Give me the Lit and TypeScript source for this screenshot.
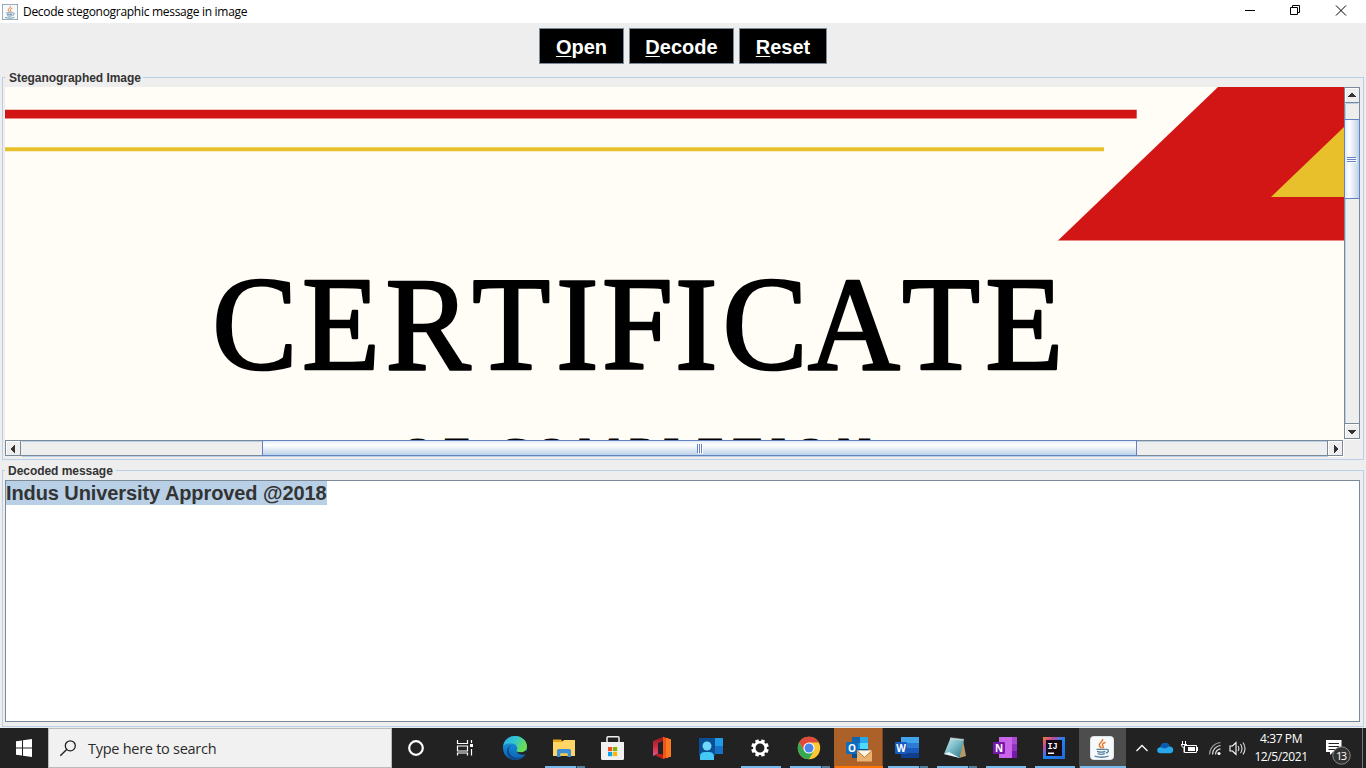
import { LitElement, html, svg, css } from "lit";
import { customElement, property } from "lit/decorators.js";
import { classMap } from "lit/directives/class-map.js";

const javaCup = svg`
  <rect x="11.500" y="8.500" width="23" height="23" rx="3" fill="#f7f9fa" stroke="#dfe6ea"/>
  <path d="M23.600 11c1 2.800-4.400 3.800-3.200 6.600.4 1 1.400 1.800 2 2.600M26.500 14.200c-2.600 1-4 2.200-2.600 3.800.7.9.4 1.700-.3 2.400" fill="none" stroke="#e8762c" stroke-width="1.500"/>
  <path d="M17.500 21.300h9.200M18 23.300c2.500 1 6 1 8.400 0M18.800 25.600c2 .8 5 .8 7 0M15.600 28.200c4 1.500 10.500 1.400 14-.2M27 21.500c3-.8 3.500 2.500-.2 3.700" fill="none" stroke="#5682a1" stroke-width="1.300"/>`;

const letterTile = (letter: string, dark: string) => svg`
  <rect x="12" y="14" width="12" height="12" rx="1" fill=${dark}/>
  <text x="18" y="24" class="tile-letter" text-anchor="middle">${letter}</text>`;

const ICONS: Record<string, unknown> = {
  cortana: svg`<circle cx="23" cy="20" r="6.800" fill="none" stroke="#fff" stroke-width="2.200"/>`,
  taskview: svg`
    <path d="M15.500 12v3.500h10V12M15.500 27.500V25h10v2.500M15.500 18h10v5h-10z" fill="none" stroke="#fff" stroke-width="1.200"/>
    <path d="M29.500 12v3M29.500 21v6.500" stroke="#fff" stroke-width="1.200"/><rect x="28" y="16" width="3" height="3" fill="#fff"/>`,
  edge: svg`
    <defs>
      <linearGradient id="e1" x1="0" y1="0" x2="1" y2=".4"><stop offset="0" stop-color="#2aa9e8"/><stop offset=".5" stop-color="#31c5d4"/><stop offset="1" stop-color="#6ae04e"/></linearGradient>
      <linearGradient id="e2" x1="0" y1="0" x2="0" y2="1"><stop offset="0" stop-color="#1b9de0"/><stop offset="1" stop-color="#0b63b8"/></linearGradient>
    </defs>
    <circle cx="24" cy="20" r="12" fill="url(#e2)"/>
    <path d="M12 18.500C13 12 18 8 24 8c7 0 12 5 12 10.600 0 3.800-3 5.900-6.500 5.900-2.500 0-4.500-.7-4-1.800 1.700-2.200.8-6.700-4.500-7.200-4.500-.4-8 .8-9 3z" fill="url(#e1)"/>
    <path d="M20.500 17c-4 2.500-3.500 9 1.200 11.500 4.500 2.400 9.500 1 12.300-1.500-3 5-10 6.500-14.500 3.500-5-3.300-5-11 1-13.500z" fill="#114a8b"/>
    <path d="M25.500 22.700c1 2.200 6.500 2.300 9.200-.2l2 1.500-2 2.200c-4 1.300-8.200 0-9.200-3.500z" fill="#222"/>`,
  folder: svg`
    <path d="M13 11.500h8l1.500 2H35V28H13z" fill="#e9a614"/><path d="M13 14h9l2-2h11v16H13z" fill="#ffd566"/>
    <path d="M17 29v-6.500q0-1.500 1.500-1.500h11q1.500 0 1.500 1.500V29h-3.500v-3.500h-7V29z" fill="#3c8fd6"/><path d="M20.500 25.500h7V28h-7z" fill="#f5c64a"/>`,
  store: svg`
    <path d="M18 15V9.700q0-1 1-1h10q1 0 1 1V15" fill="none" stroke="#eee" stroke-width="1.500"/>
    <path d="M12 14h23v16.500q0 1.500-1.500 1.500h-20Q12 32 12 30.500z" fill="#f1f1f1"/>
    <path d="M19 19h4.200v4.200H19z" fill="#f25022"/><path d="M24 19h4.200v4.200H24z" fill="#7fba00"/><path d="M19 24h4.200v4.200H19z" fill="#00a4ef"/><path d="M24 24h4.200v4.200H24z" fill="#ffb900"/>`,
  office: svg`
    <defs><linearGradient id="o1" x1="0" y1="0" x2="0" y2="1"><stop offset="0" stop-color="#8e1a1a"/><stop offset=".6" stop-color="#d8304e"/><stop offset="1" stop-color="#e05a9a"/></linearGradient></defs>
    <path d="M15 13l10-4.300V13l-5 2v10.500L15 28z" fill="url(#o1)"/>
    <path d="M25 8.700l8 2.800v17L25 31z" fill="#f2541b"/><path d="M28 9.800l5 1.700v17l-5 1.500z" fill="#fb7a1e"/>
    <path d="M17 27.300l3-1.500 5 .7V31z" fill="#b8211f"/>`,
  people: svg`
    <path d="M12 10h16v18H12z" fill="#0a4f94"/><path d="M28 10h8v16h-8z" fill="#1f9be8"/><path d="M28 18h8v8h-8z" fill="#1672c4"/>
    <circle cx="20" cy="18" r="4.500" fill="#6fd8f8"/><path d="M13 32v-3q0-5 5-5h4q5 0 5 5v3z" fill="#45c8f5"/>`,
  settings: svg`
    <circle cx="24" cy="20" r="5.700" fill="none" stroke="#fff" stroke-width="2.500"/>
    ${[0, 45, 90, 135, 180, 225, 270, 315].map((a) => svg`<path d="M22.200 11.200h3.600v3h-3.600z" fill="#fff" transform="rotate(${a + 22.5} 24 20)"/>`)}`,
  chrome: svg`
    <circle cx="24" cy="20" r="11.200" fill="#fcc934"/>
    <path d="M14.300 14.400A11.200 11.200 0 0 1 33.700 14.400H24l-5 8.500z" fill="#e0483b"/>
    <path d="M14.300 14.400A11.200 11.200 0 0 0 24 31.200l4.900-8.400-9.800.2z" fill="#34a853"/>
    <circle cx="24" cy="20" r="5.600" fill="#fff"/><circle cx="24" cy="20" r="4.500" fill="#4a86e8"/>`,
  outlook: svg`
    <path d="M18 9h16v18H18z" fill="#1490df"/><path d="M18 9h8v6h-8z" fill="#0f65ae"/><path d="M26 9h8v6h-8z" fill="#28a8ea"/><path d="M26 15h8v6h-8z" fill="#50d9ff"/><path d="M18 21h16v9H18z" fill="#0a4e90"/>
    ${letterTile("O", "#0f6cbd")}
    <path d="M23 22.500h15v11H23z" fill="#e9b36f"/><path d="M23 22.500h15l-7.500 6.500z" fill="#fff3e2"/><path d="M23 22.500l7.500 7 7.500-7" fill="none" stroke="#b9752f" stroke-width=".9"/>`,
  word: svg`
    <path d="M18 9h18v6H18z" fill="#41a5ee"/><path d="M18 15h18v5H18z" fill="#2b7cd3"/><path d="M18 20h18v5.500H18z" fill="#185abd"/><path d="M18 25.500h18V30H18z" fill="#103f91"/>
    ${letterTile("W", "#185abd")}`,
  notepad: svg`
    <defs><linearGradient id="n1" x1="0" y1="0" x2="1" y2="1"><stop offset="0" stop-color="#d4eff2"/><stop offset=".5" stop-color="#74b8c4"/><stop offset="1" stop-color="#2f7180"/></linearGradient></defs>
    <path d="M31 12l3 16-7 2z" fill="#b79a64"/><path d="M18.500 10L32 11.500 27.500 30 12 26z" fill="url(#n1)"/>
    <path d="M12 26l5-2 11 6z" fill="#e8f4f5"/><path d="M18.500 10.300L32 11.800" stroke="#ededed" stroke-dasharray="1 1" stroke-width="2"/>`,
  onenote: svg`
    <path d="M18 9h18v21H18z" fill="#ca64ea"/><path d="M31 9h5v7h-5z" fill="#ae4bd5"/><path d="M31 16h5v7h-5z" fill="#9332bf"/><path d="M31 23h5v7h-5z" fill="#7719aa"/>
    ${letterTile("N", "#7719aa")}`,
  idea: svg`
    <defs><linearGradient id="i1" x1="0" y1="0" x2="1" y2="1"><stop offset="0" stop-color="#f97a36"/><stop offset=".25" stop-color="#c24a9a"/><stop offset=".5" stop-color="#1c83f5"/><stop offset="1" stop-color="#2468dc"/></linearGradient></defs>
    <path d="M13 9h22v22H13z" fill="url(#i1)"/><path d="M16 12h16v16H16z" fill="#170b14"/>
    <text x="17.500" y="20.500" class="idea-letter">IJ</text><path d="M18 24.500h6V26h-6z" fill="#fff"/>`,
  java: javaCup,
};

@customElement("task-button")
class TaskButton extends LitElement {
  @property() icon = "";
  @property() state = "";
  @property({ type: Boolean }) stacked = false;

  static styles = css`
    :host { display: block; flex: none; width: 49px; height: 40px; }
    .cell { width: 49px; height: 40px; display: grid; box-sizing: border-box; }
    .cell > * { grid-area: 1 / 1; }
    .alert { background: #ab6128; border-right: 1px solid #7d451c; }
    .active { background: #4d4d4d; width: 47px; overflow: hidden; }
    .line { align-self: end; justify-self: center; width: 40px; height: 2px; background: #76b9ed; }
    .stacked { background: linear-gradient(90deg, #76b9ed 31px, #263c4d 31px 32px, #527e9f 32px); }
    .alert .line { width: 48px; background: #ff7500; }
    .active .line { width: 47px; }
    svg { display: block; }
    .tile-letter { font: bold 10px "Open Sans", sans-serif; fill: #fff; }
    .idea-letter { font: bold 8.500px "Liberation Mono", monospace; fill: #fff; }
  `;

  render() {
    return html`<div class=${classMap({ cell: true, alert: this.state === "alert", active: this.state === "active" })}>
      <svg width="49" height="40">${ICONS[this.icon]}</svg>
      ${this.state ? html`<div class=${classMap({ line: true, stacked: this.stacked })}></div>` : ""}
    </div>`;
  }
}

const TASKS: [string, string, boolean][] = [
  ["cortana", "", false], ["taskview", "", false], ["edge", "", false], ["folder", "open", true],
  ["store", "", false], ["office", "", false], ["people", "", false], ["settings", "open", false],
  ["chrome", "open", true], ["outlook", "alert", false], ["word", "open", true], ["notepad", "open", true],
  ["onenote", "open", false], ["idea", "open", false], ["java", "active", false],
];

@customElement("task-bar")
class TaskBar extends LitElement {
  static styles = css`
    :host { display: flex; height: 40px; background: #222; color: #fff; font: 12px/18px "Open Sans", "Noto Sans", sans-serif; }
    svg { display: block; flex: none; }
    .search { box-sizing: border-box; flex: none; width: 344px; height: 40px; border: 1px solid #b9b9b9; background: #f1f1f1; display: flex; align-items: center; color: #2b2b2b; font-size: 14.500px; line-height: 20px; letter-spacing: -0.270px; padding-left: 10px; gap: 11px; }
    .search span { padding-top: 1px; }
    .apps { display: flex; flex: none; width: 735px; padding-left: 1px; }
    .clock { flex: none; width: 70px; text-align: center; padding-top: 2px; letter-spacing: -0.400px; white-space: nowrap; }
    .badge { font: 11px "Open Sans", sans-serif; fill: #fff; }
  `;

  render() {
    return html`
      <svg width="48" height="40"><path d="M16 13.200l6-.8v7H16zM23 12.200l9-1.200v8.400h-9zM16 20.500h6v7l-6-.8zM23 20.500h9V29l-9-1.300z" fill="#fff"/></svg>
      <div class="search">
        <svg width="18" height="18"><circle cx="11.300" cy="6.800" r="5" fill="none" stroke="#222" stroke-width="1.300"/><path d="M7.700 10.400L1.300 16.800" stroke="#222" stroke-width="1.400"/></svg>
        <span>Type here to search</span>
      </div>
      <div class="apps">${TASKS.map(([i, s, k]) => html`<task-button .icon=${i} .state=${s} .stacked=${k}></task-button>`)}</div>
      <svg width="118" height="40">
        <path d="M8.500 23l5.500-5.500 5.500 5.500" fill="none" stroke="#fff" stroke-width="1.300"/>
        <path d="M32.500 25.300q-3.300-.2-3.300-3 .2-2.800 3.200-3 1.200-4.300 5-4.200 3.200.2 4.200 3.500 3.500.4 3.700 3.500-.2 3-3.300 3.200z" fill="#28a8ea"/><path d="M32.400 19.300q1.200-4.300 5-4.200 3.200.2 4.200 3.500l-4.600 2z" fill="#0a5bb0"/>
        <path d="M56.500 17.500h12v7h-12zM69.500 19v4" fill="none" stroke="#fff"/><path d="M60 19h7v4h-7z" fill="#fff"/>
        <path d="M54.500 13v3M57.500 13v3M53 16.500h6M53.500 16.500q0 3 2.500 3v5" fill="none" stroke="#fff"/>
        <g fill="none" stroke="#999" stroke-width="1.200"><path d="M81.500 26.500A12 12 0 0 1 92.500 14.500" /><path d="M84.500 26.500A9 9 0 0 1 92.500 17.500M87.500 26.500A6 6 0 0 1 92.500 20.800" stroke="#ddd"/></g><circle cx="91" cy="25.500" r="1.600" fill="#fff"/>
        <path d="M102 18h2.500l3.500-3.500v12L104.500 23H102z" fill="none" stroke="#fff" stroke-width="1.100"/>
        <path d="M110 18q1.700 2.500 0 5M112.500 16q3 4.500 0 9M115 14.500q4 6 0 12" fill="none" stroke="#ddd" stroke-width="1.100"/>
      </svg>
      <div class="clock"><div>4:37 PM</div><div>12/5/2021</div></div>
      <svg width="51" height="40">
        <path d="M10 12h15.500v12H17l-3 3v-3h-4z" fill="#fff"/><path d="M12.500 15.500h10.500M12.500 18.500h10.500M12.500 21.500h7" stroke="#222"/>
        <circle cx="25.500" cy="27.500" r="8.700" fill="#333" stroke="#8b8b8b"/><text class="badge" x="25.500" y="31.500" text-anchor="middle" textLength="11">13</text>
        <path d="M46.500 0v40" stroke="#777"/>
      </svg>`;
  }
}

@customElement("app-root")
class AppRoot extends LitElement {
  static styles = css`
    :host { display: flex; flex-direction: column; width: 1366px; height: 768px; overflow: hidden; background: #eee; color: #333; font-family: "Liberation Sans", Arial, sans-serif; }
    * { box-sizing: border-box; }
    svg { display: block; }
    .title { height: 23px; background: #fff; display: flex; align-items: center; color: #000; font: 12px/23px "Open Sans", "Noto Sans", sans-serif; padding-left: 2px; gap: 5px; }
    .title span { flex: 1; letter-spacing: -0.290px; }
    .tools { height: 47px; display: flex; justify-content: center; gap: 5px; padding: 5px 0 6px; }
    .tools button { height: 36px; border: 1px solid #7a8a99; border-radius: 0; background: #000; color: #fff; font: bold 20px/32px "Liberation Sans", sans-serif; padding: 2px 0 0; }
    .tools u { text-decoration-thickness: 1px; text-underline-offset: 2px; text-decoration-skip-ink: none; }
    .open { width: 85px; } .decode { width: 105px; } .reset { width: 88px; }
    fieldset { margin: 0 2px; padding: 0 3px 0 2px; border: 1px solid #b8cfe5; min-width: 0; }
    legend { font-weight: bold; font-size: 12px; line-height: 17px; height: 15px; padding: 0 3px; margin-left: 0; white-space: nowrap; letter-spacing: -0.040px; }
    .image { height: 390px; margin-top: 0; }
    .image legend { padding: 0 2px 0 4px; }
    .message { height: 264px; margin-top: 3px; }
    .view { display: grid; grid-template: 353px 16px / 1339px 16px; margin-top: 2px; }
    .message .area { height: 242px; margin-top: 2px; border: 1px solid #7a8a99; background: #fff; font-weight: bold; font-size: 20px; line-height: 24px; }
    .area span { display: inline-block; background: #b8cfe5; white-space: nowrap; letter-spacing: -0.090px; }
    .big { font: 133px "Liberation Serif", serif; fill: #000; stroke: #000; stroke-width: 2.600px; stroke-linejoin: round; }
    .sub { font: 46px "Liberation Serif", serif; fill: #000; stroke: #000; stroke-width: 1px; }
    task-bar { margin-top: auto; }
  `;

  render() {
    return html`
      <div class="title">
        <svg width="16" height="16" viewBox="11 8 24 24">${javaCup}<rect x="11.500" y="8.500" width="23" height="23" fill="none" stroke="#8299aa" stroke-width="1.300"/></svg>
        <span>Decode stegonographic message in image</span>
        <svg width="124" height="23"><g fill="none" stroke="#000"><path d="M3 10.500h10M48.500 7.500h7v7h-7zM50.500 7.500v-2h7v7h-2M94 5.500l10 10M104 5.500l-10 10"/></g></svg>
      </div>
      <div class="tools">
        <button class="open"><u>O</u>pen</button><button class="decode"><u>D</u>ecode</button><button class="reset"><u>R</u>eset</button>
      </div>
      <fieldset class="image">
        <legend>Steganographed Image</legend>
        <div class="view">
          <svg width="1339" height="353">
            <rect width="1339" height="353" fill="#fffdf6"/>
            <path d="M0 22.700h1131.700v8.800H0z" fill="#d21615"/><path d="M0 60.200h1099v4H0z" fill="#e7c02b"/>
            <path d="M1213 0h126v153.500h-286z" fill="#d21615"/><path d="M1339 40v70h-73z" fill="#e7c02b"/>
            <text class="big" transform="scale(.96 1)" y="282.500" x="215.800 309.500 396.300 486.800 574 622 698 747.500 836.200 934.500 1021">CERTIFICATE</text>
            <text class="sub" y="383" x="396 439 470 492.500 530 573.500 624.500 658.500 692.500 728 765.500 789 832.500">OF COMPLETION</text>
          </svg>
          <svg width="16" height="353" shape-rendering="crispEdges">
            <defs><linearGradient id="gv"><stop offset="0" stop-color="#dce8f3"/><stop offset=".3" stop-color="#fff"/><stop offset="1" stop-color="#b8cfe5"/></linearGradient></defs>
            <path d="M.5 0v352" stroke="#7a8a99"/><path d="M1.500 17v319" stroke="#b8cfe5"/><path d="M0 .5h15M1 15.500h14M1 336.500h14M1 351.500h14M15.500 0v352" stroke="#7a8a99"/><path d="M2 16.500h12" stroke="#b8cfe5"/><path d="M1.500 2v13M1 1.500h13M1 352.500h15M1.500 337v14M2 337.500h12" stroke="#fff" fill="none"/>
            <path d="M4 10h8v-1h-1v-1h-1V7H9V6H7v1H6v1H5v1H4zM4 343h8v1h-1v1h-1v1H9v1H7v-1H6v-1H5v-1H4z" fill="#333"/>
            <rect x=".5" y="32.500" width="15" height="79" fill="url(#gv)" stroke="#6382bf"/>
            <path d="M3 70.500h9M3 72.500h9M3 74.500h9" stroke="#6382bf"/><path d="M4 71.500h9M4 73.500h9M4 75.500h9" stroke="#fff"/>
          </svg>
          <svg width="1339" height="17" shape-rendering="crispEdges">
            <defs><linearGradient id="gh" x2="0" y2="1"><stop offset="0" stop-color="#dce8f3"/><stop offset=".3" stop-color="#fff"/><stop offset="1" stop-color="#b8cfe5"/></linearGradient></defs>
            <path d="M17 1.500h1305M17 16.500h1306" stroke="#b8cfe5"/><path d="M0 .5h1338M1 15.500h1337M.5 0v16M15.500 1v15M1322.500 1v15M1337.500 0v16" stroke="#7a8a99"/><path d="M1 1.500h14M1.500 1v14M1323 1.500h14M1323.500 1v14M1338.500 1v15M1323 16.500h16" stroke="#fff"/>
            <path d="M10 5v8H9v-1H8v-1H7v-1H6V8h1V7h1V6h1V5zM1329 5v8h1v-1h1v-1h1v-1h1V8h-1V7h-1V6h-1V5z" fill="#333"/>
            <rect x="257.500" y=".5" width="874" height="15" fill="url(#gh)" stroke="#6382bf"/>
            <path d="M692.500 4v9M694.500 4v9M696.500 4v9" stroke="#6382bf"/><path d="M693.500 5v9M695.500 5v9M697.500 5v9" stroke="#fff"/>
          </svg>
        </div>
      </fieldset>
      <fieldset class="message">
        <legend>Decoded message</legend>
        <div class="area"><span>Indus University Approved @2018</span></div>
      </fieldset>
      <task-bar></task-bar>`;
  }
}
